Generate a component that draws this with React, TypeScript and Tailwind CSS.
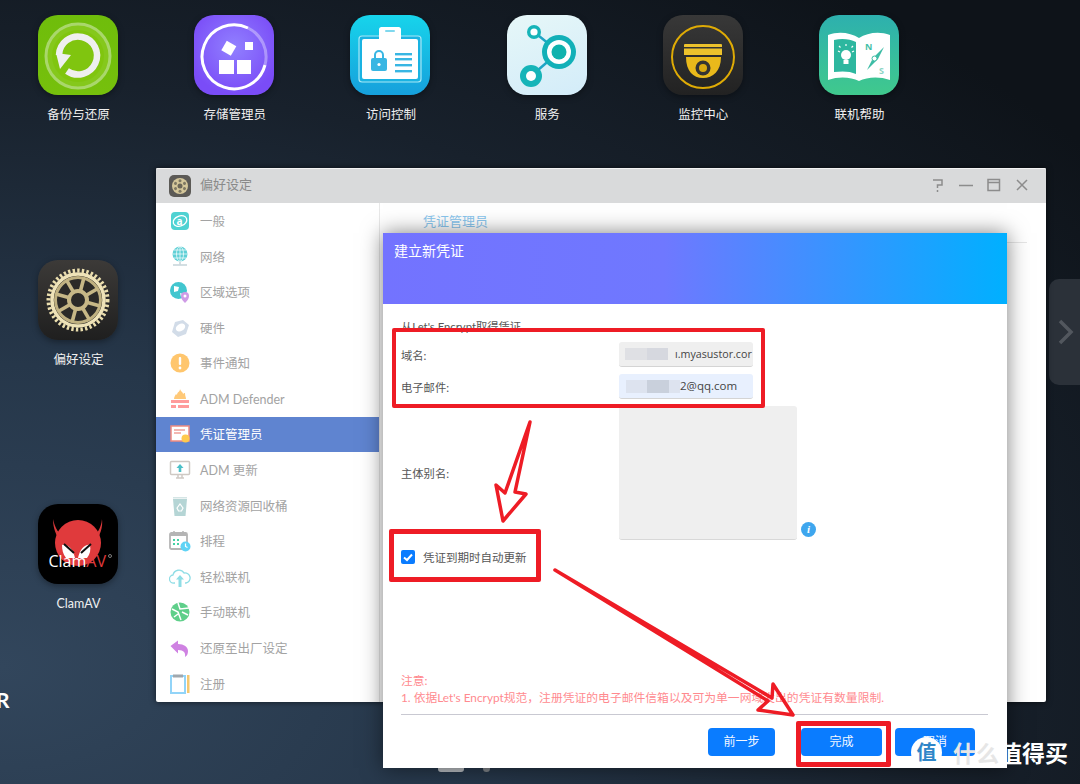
import React from 'react';

const Tile = ({ className, children }: { className: string; children: React.ReactNode }) => (
  <div className={`h-20 w-20 overflow-hidden rounded-[20px] shadow-[0_2px_6px_rgba(0,0,0,0.35)] ${className}`}>
    <svg viewBox="0 0 80 80" className="h-20 w-20">
      {children}
    </svg>
  </div>
);

const BackupIcon = () => (
  <Tile className="bg-[linear-gradient(180deg,#6fbd0b,#76c00c)]">
    <circle cx="40" cy="41" r="32" fill="#85c81c" stroke="#a9d76b" strokeWidth="3" />
    <circle cx="40" cy="41" r="26" fill="#80c50f" />
    <path d="M21 40A19 19 0 1 1 29 56" fill="none" stroke="#efefef" strokeWidth="6.500" />
    <path d="M18 38L33 40L22 54Z" fill="#efefef" />
  </Tile>
);

const StorageIcon = () => (
  <Tile className="bg-[radial-gradient(circle_at_50%_40%,#9180ff,#7a4cf7_75%)]">
    <path d="M54 13A32 32 0 1 0 71 50" fill="none" stroke="#fff" strokeWidth="3" />
    <path d="M54 13A32 32 0 0 1 71 50" fill="none" stroke="#fff" strokeOpacity="0.35" strokeWidth="3" />
    <rect x="25" y="45" width="15" height="14" fill="#fff" />
    <rect x="43" y="45" width="14" height="14" fill="#fff" />
    <rect x="29" y="28" width="11" height="11" fill="#fff" transform="rotate(30 35 34)" />
    <rect x="51" y="27" width="8" height="8" fill="#fff" />
  </Tile>
);

const AccessIcon = () => (
  <Tile className="bg-[linear-gradient(180deg,#17d4eb,#16a0dc)]">
    <rect x="9" y="21" width="62" height="46" rx="3" fill="#1ab3e2" stroke="#a8e8f6" strokeWidth="1.2" />
    <rect x="12" y="24" width="56" height="40" rx="2" fill="#fff" />
    <rect x="29" y="12" width="22" height="16" rx="2.5" fill="#fff" />
    <rect x="35" y="15" width="10" height="2" rx="1" fill="#7fd8ee" />
    <path d="M25 43v-3a4 4 0 0 1 8 0v3" fill="none" stroke="#38b6e3" strokeWidth="2" />
    <rect x="21" y="43" width="16" height="13" rx="2" fill="#38b6e3" />
    <circle cx="29" cy="49.5" r="1.6" fill="#fff" />
    {[38, 43, 49, 55].map((y) => (
      <rect key={y} x="45" y={y} width="17" height="2.4" fill="#38b6e3" />
    ))}
  </Tile>
);

const ServiceIcon = () => (
  <Tile className="bg-[linear-gradient(160deg,#e6f7f8,#d3ecf9)]">
    <path d="M27 17L52 37L24 61" fill="none" stroke="#1fa5c6" strokeWidth="2.5" />
    <circle cx="27" cy="17" r="7" fill="#16b4b8" />
    <circle cx="27" cy="17" r="3.6" fill="#fff" />
    <circle cx="52" cy="37" r="17" fill="#12b0b8" />
    <circle cx="52" cy="37" r="12" fill="#fff" />
    <circle cx="52" cy="37" r="7.5" fill="#0fb2ad" />
    <circle cx="24" cy="61" r="11" fill="#16b4b8" />
    <circle cx="24" cy="61" r="5" fill="#fff" />
  </Tile>
);

const MonitorIcon = () => (
  <Tile className="bg-[linear-gradient(180deg,#383838,#222)]">
    <circle cx="40" cy="42" r="31" fill="none" stroke="#dfab05" strokeWidth="2" />
    <path d="M21 30a1 1 0 0 1 1-1H58a1 1 0 0 1 1 1V40H21Z" fill="#edc22c" />
    <rect x="21" y="32" width="38" height="1.5" fill="#333" />
    <path d="M23 42H58C58 56 50 63 40 63S23 56 23 42Z" fill="#e9b91b" />
    <circle cx="40" cy="53" r="7.5" fill="#333" />
    <circle cx="40" cy="53" r="4" fill="#d9a90f" />
  </Tile>
);

const HelpIcon = () => (
  <Tile className="bg-[linear-gradient(180deg,#2db0ae,#40c98d)]">
    <path d="M9 20C20 16 32 18 40 23C48 18 60 16 71 20V65C60 61 48 62 40 66C32 62 20 61 9 65Z" fill="#fff" />
    <path d="M15 25C23 23 31 24 37 27V59C31 56 23 56 15 57Z" fill="#2db79f" />
    <circle cx="27" cy="40" r="5" fill="#fff" />
    <rect x="24.5" y="45" width="5" height="4" fill="#fff" />
    <path d="M27 29v2M19 36l2 1M35 36l-2 1M20 31l1.5 1.5M34 31l-1.5 1.5" stroke="#fff" strokeWidth="1.2" />
    <path d="M65 32L54 43L48 55L59 44Z" fill="#3cbca5" />
    <circle cx="55.500" cy="43.500" r="2.500" fill="#fff" stroke="#3cbca5" />
    <text x="46" y="35" fontSize="9" fontWeight="700" fill="#46bfa8" fontFamily="Open Sans">N</text>
    <text x="60" y="59" fontSize="9" fontWeight="700" fill="#8bd5c4" fontFamily="Open Sans">S</text>
  </Tile>
);

const GearIcon = () => (
  <Tile className="bg-[linear-gradient(180deg,#3c3a38,#1f1f1f)]">
    <circle cx="40" cy="40" r="29.500" fill="none" stroke="#ecdfae" strokeWidth="4" strokeDasharray="2.4 2.2" />
    <circle cx="40" cy="40" r="26" fill="#2b2a28" stroke="#efe3b8" strokeWidth="3.500" />
    <circle cx="40" cy="40" r="22.500" fill="none" stroke="#bfb080" strokeWidth="3" />
    {[0, 45, 90, 135, 180, 225, 270, 315].map((a) => (
      <rect key={a} x="38.200" y="17" width="3.600" height="16" fill="#c6b786" transform={`rotate(${a + 15} 40 40)`} />
    ))}
    <circle cx="40" cy="40" r="9" fill="#2b2a28" stroke="#c6b786" strokeWidth="4" />
  </Tile>
);

const ClamIcon = () => (
  <Tile className="bg-black">
    <path d="M15 15C17 25 21 30 27 33L23 37C18 32 15 24 15 15Z" fill="#d8383a" />
    <path d="M64 15C63 25 59 30 53 33L57 37C62 32 65 24 64 15Z" fill="#d8383a" />
    <circle cx="40" cy="39" r="23" fill="#e03a3c" />
    <path d="M24 41C30 40 35 45 37 54L28 54C25 50 24 46 24 41Z" fill="#fff" />
    <path d="M52 41C47 40 42 45 40 54L49 54C52 50 53 46 52 41Z" fill="#fff" />
    <path d="M26 40L36 49M53 40L43 49" stroke="#111" strokeWidth="2" />
    <text x="10.500" y="63" fontSize="16" fill="#fff" fontFamily="Open Sans">
      Clam<tspan fill="#e03a3c">AV</tspan>
    </text>
    <circle cx="72" cy="52" r="1.500" fill="none" stroke="#ccc" strokeWidth="0.600" />
  </Tile>
);

const desktopTop = [
  { label: '备份与还原', icon: <BackupIcon /> },
  { label: '存储管理员', icon: <StorageIcon /> },
  { label: '访问控制', icon: <AccessIcon /> },
  { label: '服务', icon: <ServiceIcon /> },
  { label: '监控中心', icon: <MonitorIcon /> },
  { label: '联机帮助', icon: <HelpIcon /> },
];

const DesktopApp = ({ label, icon, className }: { label: string; icon: React.ReactNode; className?: string }) => (
  <div className={`flex flex-col items-center gap-[11px] ${className ?? ''}`}>
    {icon}
    <span className="ml-[1px] text-[12.500px] leading-[18px] text-[#f0f0f0]">{label}</span>
  </div>
);

const Ico = ({ children }: { children: React.ReactNode }) => (
  <svg viewBox="0 0 22 22" className="h-[22px] w-[22px] shrink-0">
    {children}
  </svg>
);

const sidebarItems: Array<{ label: string; icon: React.ReactNode }> = [
  {
    label: '一般',
    icon: (
      <Ico>
        <rect x="2" y="2" width="18" height="18" rx="4" fill="#4fd2d2" />
        <ellipse cx="11" cy="11" rx="7" ry="5" fill="none" stroke="#fff" strokeWidth="1.300" transform="rotate(-20 11 11)" />
        <text x="7.500" y="14.500" fontSize="10" fontWeight="700" fill="#fff" fontFamily="Open Sans">a</text>
      </Ico>
    ),
  },
  {
    label: '网络',
    icon: (
      <Ico>
        <circle cx="11" cy="9" r="7.500" fill="#5fd0d6" />
        <path d="M3.500 9h15M11 1.500v15M5 5h12M5 13h12" stroke="#fff" strokeWidth="0.700" />
        <ellipse cx="11" cy="9" rx="3.500" ry="7.500" fill="none" stroke="#fff" strokeWidth="0.700" />
        <path d="M4 20h14" stroke="#c5d3d8" strokeWidth="1.500" />
        <path d="M11 16.500v3" stroke="#c5d3d8" strokeWidth="1.500" />
      </Ico>
    ),
  },
  {
    label: '区域选项',
    icon: (
      <Ico>
        <circle cx="9.500" cy="9.500" r="8.500" fill="#42c6cf" />
        <path d="M5 5l5 1-1 4-4 1ZM11 12l3 1-2 3Z" fill="#fff" />
        <path d="M16 22c-3-3-4-5-4-7a4 4 0 0 1 8 0c0 2-1 4-4 7Z" fill="#cf9be6" />
        <circle cx="16" cy="15" r="1.500" fill="#fff" />
      </Ico>
    ),
  },
  {
    label: '硬件',
    icon: (
      <Ico>
        <path d="M6 5l8-2 6 5-3 9-8 3-6-5Z" fill="#d2dce8" />
        <ellipse cx="11.500" cy="10.500" rx="5" ry="3.500" fill="#fff" transform="rotate(-30 11.500 10.500)" />
      </Ico>
    ),
  },
  {
    label: '事件通知',
    icon: (
      <Ico>
        <circle cx="11" cy="11" r="9.500" fill="#ffc66d" />
        <rect x="9.800" y="5" width="2.400" height="8" rx="1" fill="#fff" />
        <circle cx="11" cy="16" r="1.400" fill="#fff" />
      </Ico>
    ),
  },
  {
    label: 'ADM Defender',
    icon: (
      <Ico>
        <path d="M11 1c1 3 3 3 3 5 1-1 1-1 2-1 0 3 1 4 1 6H5c0-2 1-3 2-5 1 1 1 1 1 1 0-3 3-3 3-6Z" fill="#ffc978" />
        <path d="M2 12h18v3H2ZM2 17h5v3H2ZM9 17h11v3H9Z" fill="#ff9c9c" />
      </Ico>
    ),
  },
  {
    label: '凭证管理员',
    icon: (
      <Ico>
        <rect x="2" y="3" width="18" height="15" fill="#fff" stroke="#f08a80" strokeWidth="1.500" />
        <path d="M5 7h11M5 10h7" stroke="#f0a098" strokeWidth="1.300" />
        <circle cx="16.500" cy="15.500" r="4" fill="#ffc94d" />
      </Ico>
    ),
  },
  {
    label: 'ADM 更新',
    icon: (
      <Ico>
        <rect x="1.500" y="2.500" width="19" height="13" rx="1" fill="#fff" stroke="#cfc9c4" strokeWidth="1.500" />
        <path d="M11 5l3.500 4H12.300v4H9.700V9H7.500Z" fill="#4cc0c8" />
        <path d="M7 19h8M9 16v3M13 16v3" stroke="#cfc9c4" strokeWidth="1.500" />
      </Ico>
    ),
  },
  {
    label: '网络资源回收桶',
    icon: (
      <Ico>
        <path d="M4 4h14l-1.500 17h-11Z" fill="#b5d5d5" />
        <rect x="4" y="2" width="14" height="1.500" fill="#d5e5e5" />
        <path d="M8 13l3-4 3 4-1.500 3h-3Z" fill="none" stroke="#fff" strokeWidth="1.200" />
      </Ico>
    ),
  },
  {
    label: '排程',
    icon: (
      <Ico>
        <rect x="1" y="3" width="17" height="16" rx="1.500" fill="#fff" stroke="#b5b5b5" strokeWidth="1.800" />
        <rect x="1" y="3" width="17" height="3" fill="#b5b5b5" />
        <path d="M5 1v3M14 1v3" stroke="#b5b5b5" strokeWidth="1.500" />
        <path d="M4 9h2v2H4ZM8 9h2v2H8ZM4 13h2v2H4ZM8 13h2v2H8Z" fill="#45d2a5" />
        <circle cx="16.500" cy="16.500" r="5" fill="#5fd3f5" />
        <path d="M16.500 13.500v3l2 1" fill="none" stroke="#fff" strokeWidth="1.200" />
      </Ico>
    ),
  },
  {
    label: '轻松联机',
    icon: (
      <Ico>
        <path d="M6 17H5a4 4 0 0 1-1-8 6 6 0 0 1 11-2 5 5 0 0 1 2 10h-1" fill="none" stroke="#8fdde5" strokeWidth="1.300" />
        <path d="M11 9l4 4.500h-2.500V21h-3v-7.500H7Z" fill="#8fdde5" />
      </Ico>
    ),
  },
  {
    label: '手动联机',
    icon: (
      <Ico>
        <circle cx="11" cy="11" r="9.500" fill="#5fcf8a" />
        <path d="M3 8l6 3 3 8M9 2l2 6 9-1M13 11l6 3M5 16l4-3" stroke="#fff" strokeWidth="1.500" fill="none" />
      </Ico>
    ),
  },
  {
    label: '还原至出厂设定',
    icon: (
      <Ico>
        <path d="M1.500 9L9 3.500V7c6 0 10 3 10 7 0 3-1 5-3 6 .8-4-1-7-7-7v3.500Z" fill="#cf82e2" />
      </Ico>
    ),
  },
  {
    label: '注册',
    icon: (
      <Ico>
        <rect x="2" y="3" width="14" height="17" fill="#fff" stroke="#92d4f8" strokeWidth="2" />
        <rect x="4" y="1.500" width="10" height="3" fill="#a0a8ae" />
        <rect x="18" y="2" width="2.500" height="18" fill="#f5c870" />
      </Ico>
    ),
  },
];

const SidebarRow = ({ label, icon, active }: { label: string; icon: React.ReactNode; active: boolean }) => (
  <div
    className={`flex h-[35.600px] items-center gap-[9px] pl-[13px] text-[12.500px] ${
      active ? 'bg-[#5f84d0] text-white' : 'text-[#a3a3a3]'
    }`}
  >
    {icon}
    <span className="pt-[3px]">{label}</span>
  </div>
);

const FieldBox = ({ className, children }: { className: string; children?: React.ReactNode }) => (
  <div
    className={`flex h-[25px] w-[134px] items-center overflow-hidden rounded-[3px] border-b border-[#d4d4d4] font-['Open_Sans',sans-serif] whitespace-nowrap text-[#444] ${className}`}
  >
    {children}
  </div>
);

const ActionButton = ({ className, children }: { className: string; children: React.ReactNode }) => (
  <button className={`flex h-7 items-center justify-center rounded-[4px] bg-[#0a7cff] text-xs text-[#f4f8ff] ${className}`}>
    {children}
  </button>
);

const CertDialog = () => (
  <div className="absolute top-[233px] left-[383px] flex h-[535px] w-[624px] flex-col bg-white shadow-[0_0_20px_rgba(0,0,0,0.5)]">
    <div className="h-[71px] bg-[linear-gradient(90deg,#7373ff_0%,#6f78ff_45%,#00b0ff_100%)] pt-[8px] pl-[11px] text-sm leading-5 text-white">
      建立新凭证
    </div>
    <div className="flex flex-1 flex-col pt-[15px] pr-[19px] pl-[18px] text-[11.300px] text-[#555]">
      <div className="h-4 leading-4">从Let's Encrypt取得凭证</div>
      <div className="mt-[7px] flex items-center">
        <span className="w-[218px] pt-[4px]">域名:</span>
        <FieldBox className="bg-[#efefef] text-[10.700px]">
          <span className="mr-[7px] ml-[6px] flex h-3 w-[43px] shrink-0 bg-[#dfe0e4]">
            <span className="ml-[22px] w-[21px] bg-[#d6d8df]" />
          </span>
          <span>ı.myasustor.cor</span>
        </FieldBox>
      </div>
      <div className="mt-[7px] flex items-center">
        <span className="w-[218px] pt-[4px]">电子邮件:</span>
        <FieldBox className="bg-[#e8f0fe] text-[11.500px]">
          <span className="ml-[7px] flex h-[13px] w-[54px] shrink-0 bg-[#dde3ef]">
            <span className="ml-[21px] w-[22px] bg-[#c9d0dc]" />
          </span>
          <span>2@qq.com</span>
        </FieldBox>
      </div>
      <div className="mt-[7px] flex items-center">
        <span className="w-[218px] pt-[2px]">主体别名:</span>
        <div className="h-[134px] w-[178px] rounded-[3px] border-b border-[#d8d8d8] bg-[#efefef]" />
        <span className="mt-[112px] ml-[4px] flex h-[15px] w-[15px] items-center justify-center rounded-full bg-[#3ea6ee] font-['Liberation_Serif',serif] text-[11px] font-bold text-white italic">
          i
        </span>
      </div>
      <div className="mt-[10px] flex h-[14px] items-center gap-[8px]">
        <span className="flex h-[14px] w-[14px] items-center justify-center rounded-[2px] bg-[#0a7cff]">
          <svg viewBox="0 0 14 14" className="h-[14px] w-[14px]">
            <path d="M3 7.500L6 10L11 4.500" fill="none" stroke="#fff" strokeWidth="2" />
          </svg>
        </span>
        <span className="pt-[2px] text-[11.500px]">凭证到期时自动更新</span>
      </div>
      <div className="flex-1" />
      <div className="text-[11.800px] leading-[17px] text-[#ff8a8f]">
        <div>注意:</div>
        <div>1. 依据Let's Encrypt规范，注册凭证的电子邮件信箱以及可为单一网域发出的凭证有数量限制.</div>
      </div>
      <div className="mt-[8px] border-t border-[#c9c9d2]" />
      <div className="mt-[13px] mr-[13px] mb-[12px] flex justify-end">
        <ActionButton className="w-[67px]">前一步</ActionButton>
        <ActionButton className="ml-[26px] w-[81px]">完成</ActionButton>
        <ActionButton className="ml-[13px] w-[80px]">取消</ActionButton>
      </div>
    </div>
  </div>
);

const PrefsWindow = () => (
  <div className="absolute top-[168px] left-[156px] flex h-[534px] w-[890px] flex-col overflow-hidden rounded-[2px] bg-white shadow-[0_0_6px_rgba(0,0,0,0.6)]">
    <div className="flex h-[35px] shrink-0 items-center border-t border-[#f2f2f2] bg-[#d9dadb] pl-[13px] text-[#8a8a8a]">
      <div className="mb-[1px] h-[22px] w-[22px] rounded-[5px] bg-[#5c5a56] p-[2px]">
        <svg viewBox="0 0 18 18" className="h-[18px] w-[18px]">
          <circle cx="9" cy="9" r="8" fill="#d5c79a" />
          <circle cx="9" cy="9" r="2.500" fill="#6b6658" />
          {[0, 60, 120, 180, 240, 300].map((a) => (
            <circle key={a} cx="9" cy="3.800" r="1.500" fill="#7f7963" transform={`rotate(${a} 9 9)`} />
          ))}
        </svg>
      </div>
      <span className="ml-[9px] mb-[2px] text-[13px]">偏好设定</span>
      <div className="mr-[17px] mb-[2px] ml-auto flex items-center gap-[14px]">
        <svg viewBox="0 0 14 16" className="h-4 w-[14px]" fill="none" stroke="#8c8c8c" strokeWidth="1.500">
          <path d="M2 3h9v5H6.500v3M6.500 13v2" />
        </svg>
        <svg viewBox="0 0 14 14" className="h-[14px] w-[14px]" fill="none" stroke="#8c8c8c" strokeWidth="1.500">
          <path d="M0 7.500h14" />
        </svg>
        <svg viewBox="0 0 14 14" className="h-[14px] w-[14px]" fill="none" stroke="#8c8c8c" strokeWidth="1.500">
          <rect x="1" y="1.500" width="11.500" height="11" />
          <path d="M1 4.500h11.500" />
        </svg>
        <svg viewBox="0 0 14 14" className="h-[14px] w-[14px]" fill="none" stroke="#8c8c8c" strokeWidth="1.500">
          <path d="M2 2l10 10M12 2L2 12" />
        </svg>
      </div>
    </div>
    <div className="flex min-h-0 flex-1">
      <div className="w-[224px] shrink-0 border-r border-[#e8e8e8]">
        {sidebarItems.map((item) => (
          <SidebarRow key={item.label} label={item.label} icon={item.icon} active={item.label === '凭证管理员'} />
        ))}
      </div>
      <div className="flex-1 px-[43px] pt-[9px]">
        <div className="text-[13px] leading-[18px] text-[#8ac6ee]">凭证管理员</div>
        <div className="mt-[12px] mr-[-24px] border-t border-[#e6e6e6]" />
      </div>
    </div>
  </div>
);

const Annotations = () => (
  <>
    <div className="absolute top-[328px] left-[392px] h-[80px] w-[373px] rounded-[2px] border-[4px] border-[#ee1c25]" />
    <div className="absolute top-[529px] left-[389px] h-[53px] w-[152px] rounded-[2px] border-[5px] border-[#ee1c25]" />
    <div className="absolute top-[721px] left-[796px] h-[46px] w-[95px] rounded-[2px] border-[5px] border-[#ee1c25]" />
    <svg viewBox="0 0 1080 784" className="pointer-events-none absolute top-0 left-0 h-[784px] w-[1080px]">
      <path
        d="M530 422L505 493L496 485L503 521L526 494L515 492Z"
        fill="none"
        stroke="#ee1c25"
        strokeWidth="3.500"
        strokeLinejoin="round"
      />
      <path
        d="M555 570L772 698L773 684L793 715L758 710L768 701Z"
        fill="none"
        stroke="#ee1c25"
        strokeWidth="3.500"
        strokeLinejoin="round"
      />
    </svg>
  </>
);

const Watermark = () => (
  <div className="absolute top-[736px] left-[911px] flex items-center font-['Noto_Sans_CJK_SC',sans-serif]">
    <span className="flex h-[31px] w-[31px] items-center justify-center rounded-full bg-white text-xl font-bold text-[#2f86c8]">
      值
    </span>
    <span className="ml-[11px] text-[23px] leading-8 font-bold">
      <span className="text-[#e6e6e6]">什么</span>
      <span className="text-white">值得买</span>
    </span>
  </div>
);

export default function App() {
  return (
    <div className="relative h-[784px] w-[1080px] overflow-hidden bg-[radial-gradient(ellipse_at_0%_85%,#32465c_0%,#26374a_32%,#18212c_62%,#0e1319_90%)] font-['Lato','Noto_Sans_CJK_SC',sans-serif]">
      <div className="flex pt-[15px]">
        {desktopTop.map((app) => (
          <DesktopApp key={app.label} label={app.label} icon={app.icon} className="w-[156.200px]" />
        ))}
      </div>

      <DesktopApp label="偏好设定" icon={<GearIcon />} className="absolute top-[260px] left-0 w-[156px]" />
      <DesktopApp label="ClamAV" icon={<ClamIcon />} className="absolute top-[504px] left-0 w-[156px]" />
      <span className="absolute top-[686px] left-[-4px] text-[21px] leading-7 font-bold text-white">R</span>

      <div className="absolute top-[279px] left-[1049px] flex h-[106px] w-[31px] items-center justify-center rounded-l-[10px] bg-[#2b3139]">
        <svg viewBox="0 0 16 26" className="ml-[2px] h-[26px] w-4" fill="none" stroke="#52575e" strokeWidth="3.500">
          <path d="M2 2L13 13L2 24" />
        </svg>
      </div>

      <div className="absolute top-[764px] left-[438px] h-[8px] w-[26px] rounded-b-[3px] bg-[#b8bcc0]" />
      <div className="absolute top-[764px] left-[483px] h-[8px] w-[7px] rounded-full bg-[#80858a]" />

      <PrefsWindow />
      <CertDialog />
      <Annotations />
      <Watermark />
    </div>
  );
}
